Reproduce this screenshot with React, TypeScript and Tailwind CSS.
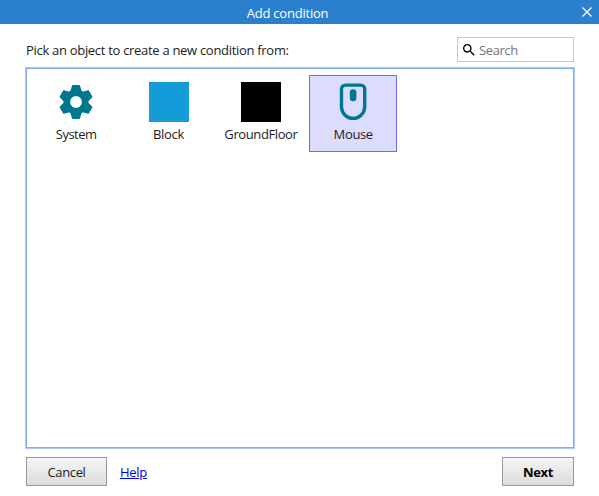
import { useState, type ReactNode } from "react";
import { MdSearch } from "react-icons/md";

function GearIcon() {
  return (
    <svg width="40" height="40" viewBox="-20 -20 40 40" fill="#007791">
      <circle r="9.2" fill="none" stroke="#007791" strokeWidth="6.6" />
      {[0, 60, 120, 180, 240, 300].map((angle) => (
        <path
          key={angle}
          transform={`rotate(${angle})`}
          d="M-5.8 -10L-4.1 -16.2Q-3.9 -16.9 -3.2 -16.9H3.2Q3.9 -16.9 4.1 -16.2L5.8 -10z"
        />
      ))}
    </svg>
  );
}

function MouseIcon() {
  return (
    <svg width="40" height="40" viewBox="0 0 40 40" fill="none">
      <path
        d="M12.4 3.1h15.4a3.9 3.9 0 0 1 3.9 3.9v17.8a11.6 11.6 0 0 1-23.2 0V7A3.9 3.9 0 0 1 12.4 3.1z"
        stroke="#007791"
        strokeWidth="3.4"
      />
      <rect x="16.8" y="7.2" width="6.6" height="12" rx="3.3" fill="#007791" />
    </svg>
  );
}

interface Item {
  name: string;
  tracking: string;
  icon: ReactNode;
}

const items: Item[] = [
  { name: "System", tracking: "tracking-[-0.5px]", icon: <GearIcon /> },
  { name: "Block", tracking: "tracking-[-0.3px]", icon: <div className="size-10 bg-[#149cd8]" /> },
  { name: "GroundFloor", tracking: "tracking-[-0.4px]", icon: <div className="size-10 bg-black" /> },
  { name: "Mouse", tracking: "tracking-[-0.35px]", icon: <MouseIcon /> },
];

export default function App() {
  const [selected, setSelected] = useState("Mouse");
  return (
    <div className="flex h-[496px] w-[599px] flex-col bg-white font-['Open_Sans','Noto_Sans',sans-serif] text-[13px] leading-[18px] text-[#1c1c1c]">
      <header className="flex h-6 shrink-0 items-center bg-[#2a80cd] text-white">
        <h1 className="flex-1 pt-px text-center tracking-[-0.22px]">Add condition</h1>
        <button className="flex w-6 justify-center" aria-label="Close">
          <svg width="10" height="10" viewBox="0 0 10 10" stroke="white" strokeWidth="1.4">
            <path d="M0.5 0.5l9 9M9.5 0.5l-9 9" />
          </svg>
        </button>
      </header>
      <main className="flex flex-1 flex-col pr-[25px] pl-[26px] pt-[13px]">
        <div className="flex h-[25px] items-center justify-between">
          <p className="whitespace-nowrap tracking-[-0.3px]">Pick an object to create a new condition from:</p>
          <label className="flex h-[25px] w-[117px] items-center border border-[#c8c8c8] pl-[3px]">
            <MdSearch size={16} className="shrink-0 text-black" />
            <input
              placeholder="Search"
              className="ml-[2px] w-20 tracking-[-0.4px] outline-none placeholder:text-[#757575]"
            />
          </label>
        </div>
        <div className="mt-[6px] flex h-[380px] items-start gap-[4.35px] border border-[#84abee] pt-[6px] pl-[5.2px] shadow-[0_0_0_1px_#a9c8fb]">
          {items.map((item) => (
            <button
              key={item.name}
              onClick={() => setSelected(item.name)}
              className={`flex h-[77px] w-[88px] flex-col items-center border pt-[6px] ${
                selected === item.name ? "border-[#6c6cf5] bg-[#dcdcff]" : "border-transparent"
              }`}
            >
              <span className="flex h-10 items-center justify-center">{item.icon}</span>
              <span className={`mt-[3px] ${item.tracking}`}>{item.name}</span>
            </button>
          ))}
        </div>
        <footer className="mt-[9px] flex h-[29px] items-center">
          <button className="h-[29px] w-[81px] border border-[#999] bg-linear-to-b from-[#f6f6f6] to-[#dcdcdc] tracking-[-0.35px]">
            Cancel
          </button>
          <a href="#" className="ml-[13px] tracking-[-0.3px] text-[#0000ee] underline">
            Help
          </a>
          <button className="ml-auto h-[29px] w-[72px] border border-[#999] bg-linear-to-b from-[#f6f6f6] to-[#dcdcdc] font-bold tracking-[-0.4px] text-black">
            Next
          </button>
        </footer>
      </main>
    </div>
  );
}
